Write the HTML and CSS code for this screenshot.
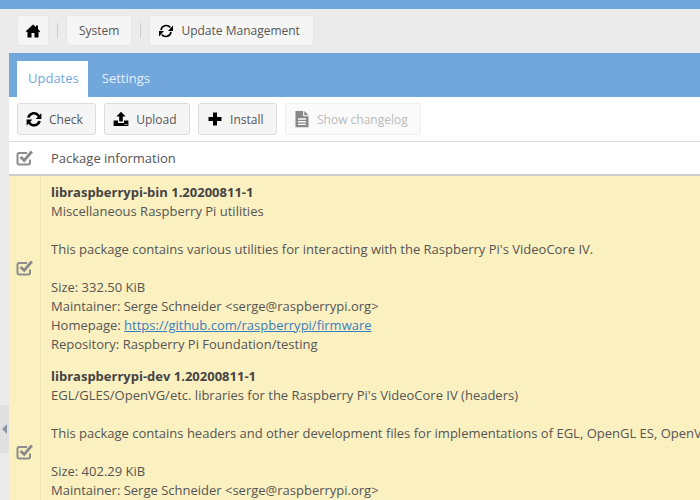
FILE: index.html
```html
<!DOCTYPE html>
<html lang="en">
<head>
    <meta charset="UTF-8">
    <title>Update Management</title>
    <link rel="stylesheet" href="styles.css">
</head>
<body>
    <div class="topbar"></div>

    <div class="crumbs">
        <a class="crumb crumb-home">
            <svg class="icon" viewBox="0 0 16 16"><path d="M8 1.5 L0.8 8.2 L1.8 9.2 L2.5 8.6 V14.5 H6.5 V10 H9.5 V14.5 H13.5 V8.6 L14.2 9.2 L15.2 8.2 L13 6.2 V2.5 H11 V4.3 Z"/></svg>
        </a>
        <span class="crumb-sep"></span>
        <a class="crumb">System</a>
        <span class="crumb-sep"></span>
        <a class="crumb crumb-icon">
            <svg class="icon" viewBox="0 0 16 16">
                <path class="arc" d="M3 7.2 A5.2 5.2 0 0 1 12.3 4.6"/>
                <path class="arc" d="M13 8.8 A5.2 5.2 0 0 1 3.7 11.4"/>
                <path d="M15 2.6 V8 H10 Z M1 13.4 V8 H6 Z"/>
            </svg>
            Update Management
        </a>
    </div>

    <div class="panel">
        <div class="tabs">
            <a class="tab active">Updates</a>
            <a class="tab">Settings</a>
        </div>

        <div class="toolbar">
            <button class="btn">
                <svg class="icon" viewBox="0 0 16 16"><path d="M8 1 C10.3 1 12.3 2.1 13.5 3.9 L15.4 2.2 V8 H9.6 L11.7 5.9 C10.9 4.4 9.6 3.5 8 3.5 C6 3.5 4.3 4.8 3.8 6.8 L1.1 6.4 C1.9 3.3 4.7 1 8 1 Z M0.6 8.6 H6.4 L4.3 10.7 C5.1 12.2 6.4 13.1 8 13.1 C10 13.1 11.7 11.8 12.2 9.8 L14.9 10.2 C14.1 13.3 11.3 15.6 8 15.6 C5.7 15.6 3.7 14.5 2.5 12.7 L0.6 14.4 Z"/></svg>
                Check
            </button>
            <button class="btn">
                <svg class="icon" viewBox="0 0 16 16">
                    <path d="M8 0.8 L12.6 5.6 H9.8 V10.4 H6.2 V5.6 H3.4 Z M0.6 9.6 H5 V12 H11 V9.6 H15.4 V15 H0.6 Z"/>
                    <path class="dots" d="M11.6 12.9 H12.6 V13.9 H11.6 Z M13.4 12.9 H14.4 V13.9 H13.4 Z"/>
                </svg>
                Upload
            </button>
            <button class="btn">
                <svg class="icon" viewBox="0 0 16 16"><path d="M6 1.5 H10 V6 H14.5 V10 H10 V14.5 H6 V10 H1.5 V6 H6 Z"/></svg>
                Install
            </button>
            <button class="btn" disabled>
                <svg class="icon icon-doc" viewBox="0 0 16 16"><path d="M2.2 0.8 H9 V5.6 H13.8 V15.4 H2.2 Z M10 0.8 L13.8 4.6 H10 Z M4.4 7.4 V8.6 H11.6 V7.4 Z M4.4 9.8 V11 H11.6 V9.8 Z M4.4 12.2 V13.4 H11.6 V12.2 Z" fill-rule="evenodd"/></svg>
                Show changelog
            </button>
        </div>

        <div class="table">
            <div class="row head">
                <div class="cell-check">
                    <svg class="check" viewBox="0 0 18 18"><use href="#checkbox"/></svg>
                </div>
                <div class="cell-info">Package information</div>
            </div>

            <div class="row package">
                <div class="cell-check">
                    <svg class="check" viewBox="0 0 18 18"><use href="#checkbox"/></svg>
                </div>
                <div class="cell-info">
                    <strong>libraspberrypi-bin 1.20200811-1</strong><br>
                    Miscellaneous Raspberry Pi utilities<br>
                    <br>
                    This package contains various utilities for interacting with the Raspberry Pi's VideoCore IV.<br>
                    <br>
                    Size: 332.50 KiB<br>
                    Maintainer: Serge Schneider &lt;serge@raspberrypi.org&gt;<br>
                    Homepage: <a href="#">https://github.com/raspberrypi/firmware</a><br>
                    Repository: Raspberry Pi Foundation/testing
                </div>
            </div>

            <div class="row package">
                <div class="cell-check">
                    <svg class="check" viewBox="0 0 18 18"><use href="#checkbox"/></svg>
                </div>
                <div class="cell-info">
                    <strong>libraspberrypi-dev 1.20200811-1</strong><br>
                    EGL/GLES/OpenVG/etc. libraries for the Raspberry Pi's VideoCore IV (headers)<br>
                    <br>
                    This package contains headers and other development files for implementations of EGL, OpenGL ES, OpenVG, etc. on the Raspberry Pi.<br>
                    <br>
                    Size: 402.29 KiB<br>
                    Maintainer: Serge Schneider &lt;serge@raspberrypi.org&gt;<br>
                    Homepage: <a href="#">https://github.com/raspberrypi/firmware</a><br>
                    Repository: Raspberry Pi Foundation/testing
                </div>
            </div>
        </div>
    </div>

    <div class="side-handle"></div>

    <svg class="defs" width="0" height="0">
        <symbol id="checkbox" viewBox="0 0 18 18">
            <path d="M14 10.5 V14 A1.5 1.5 0 0 1 12.5 15.5 H3 A1.5 1.5 0 0 1 1.5 14 V5.5 A1.5 1.5 0 0 1 3 4 H11" fill="none" stroke="currentColor" stroke-width="2"/>
            <path d="M4.5 8 L8.2 11.4 L15.8 2.6" fill="none" stroke="currentColor" stroke-width="3"/>
        </symbol>
    </svg>
</body>
</html>
```

FILE: styles.css
```css
body {
    margin: 0;
    height: 500px;
    overflow: hidden;
    background-color: #ebebeb;
    font-family: "Open Sans", sans-serif;
    font-size: 13px;
    line-height: 19px;
    color: #555;
}

.topbar {
    height: 9px;
    background-color: #72a7dc;
}

.defs {
    position: absolute;
}

.icon {
    width: 16px;
    height: 16px;
    flex: none;
    fill: #000;
}

.icon .arc {
    fill: none;
    stroke: #000;
    stroke-width: 1.6;
}

.icon .dots {
    fill: #f5f5f5;
}

.icon-doc {
    width: 18px;
    height: 18px;
    margin: 0 -1px;
}

/* breadcrumb */
.crumbs {
    display: flex;
    align-items: center;
    height: 31px;
    padding: 6px 0 7px 17px;
    font-size: 12px;
}

.crumb {
    display: flex;
    align-items: center;
    gap: 7px;
    height: 29px;
    padding: 0 12px;
    background-color: #f5f5f5;
    border: 1px solid #e6e6e6;
    border-radius: 3px;
}

.crumb-home {
    padding: 0 7px;
}

.crumb-icon {
    padding: 0 13px 0 8px;
}

.crumb-sep {
    width: 1px;
    height: 15px;
    margin: 0 8px;
    background-color: #ccc;
}

/* panel */
.panel {
    margin-left: 9px;
    width: 691px;
    background-color: #fff;
}

.tabs {
    display: flex;
    height: 36px;
    padding: 8px 0 0 8px;
    background-color: #72a7dc;
}

.tab {
    padding: 8px 10px 0 14px;
    color: #e4eef8;
}

.tab.active {
    padding: 8px 9px 0 11px;
    background-color: #fff;
    color: #72a7dc;
}

.toolbar {
    display: flex;
    gap: 8.5px;
    height: 32px;
    padding: 6px 8px;
    border-bottom: 1px solid #ddd;
}

.btn {
    display: flex;
    align-items: center;
    gap: 7px;
    height: 32px;
    padding: 0 12px 0 8px;
    background-color: #f5f5f5;
    border: 1px solid #dcdcdc;
    border-radius: 3px;
    font-family: inherit;
    font-size: 12px;
    color: #555;
}

.btn:disabled {
    background-color: #fafafa;
    border-color: #eee;
    color: #bbb;
}

.btn:disabled .icon {
    fill: #888;
}

/* package table */
.row {
    display: flex;
    white-space: nowrap;
}

.cell-check {
    display: flex;
    align-items: center;
    justify-content: center;
    flex: none;
    width: 31px;
    color: #8c8c8c;
    border-right: 1px solid transparent;
}

.cell-info {
    padding-left: 10px;
}

.head {
    height: 32px;
    border-bottom: 2px solid #ccc;
    background-color: #fff;
}

.head .cell-info {
    display: flex;
    align-items: center;
}

.package {
    background-color: #fbf0c0;
}

.package .cell-check {
    border-right-color: #f0e6b8;
}

.package .cell-info {
    padding-top: 7px;
    padding-bottom: 6px;
}

.check {
    width: 18px;
    height: 18px;
}

.cell-info strong {
    color: #444;
}

.cell-info a {
    color: #3a7ec2;
    text-decoration: underline;
}

/* sidebar collapse handle */
.side-handle {
    position: absolute;
    left: 0;
    top: 405px;
    width: 9px;
    height: 48px;
    background-color: #e0e0e0;
}

.side-handle::after {
    content: "";
    position: absolute;
    left: 2px;
    top: 19px;
    border: 5px solid transparent;
    border-left-width: 0;
    border-right-color: #8a97a5;
}
```
